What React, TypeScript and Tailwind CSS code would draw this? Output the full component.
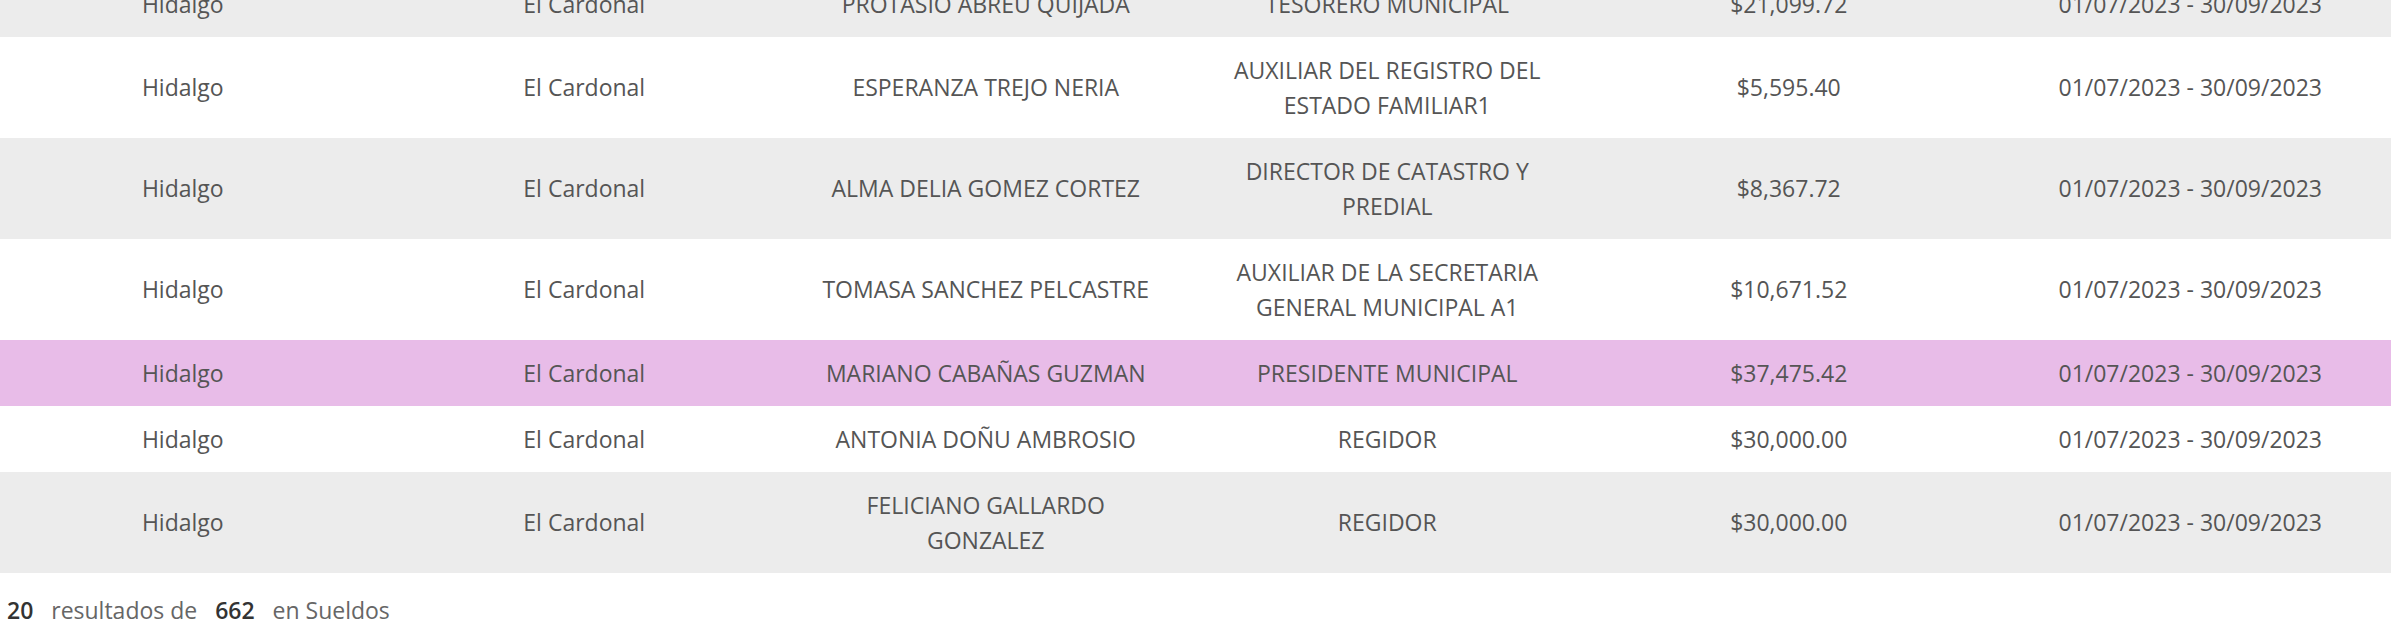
import type { FC } from "react";

type Row = {
   estado: string
   municipio: string
   nombre: string
   cargo: string
   sueldo: string
   periodo: string
   tone: 'gray' | 'white' | 'pink'
}

const rows : Row[] = [
   { estado: 'Hidalgo', municipio: 'El Cardonal', nombre: 'PROTASIO ABREU QUIJADA', cargo: 'TESORERO MUNICIPAL', sueldo: '$21,099.72', periodo: '01/07/2023 - 30/09/2023', tone: 'gray' },
   { estado: 'Hidalgo', municipio: 'El Cardonal', nombre: 'ESPERANZA TREJO NERIA', cargo: 'AUXILIAR DEL REGISTRO DEL ESTADO FAMILIAR1', sueldo: '$5,595.40', periodo: '01/07/2023 - 30/09/2023', tone: 'white' },
   { estado: 'Hidalgo', municipio: 'El Cardonal', nombre: 'ALMA DELIA GOMEZ CORTEZ', cargo: 'DIRECTOR DE CATASTRO Y PREDIAL', sueldo: '$8,367.72', periodo: '01/07/2023 - 30/09/2023', tone: 'gray' },
   { estado: 'Hidalgo', municipio: 'El Cardonal', nombre: 'TOMASA SANCHEZ PELCASTRE', cargo: 'AUXILIAR DE LA SECRETARIA GENERAL MUNICIPAL A1', sueldo: '$10,671.52', periodo: '01/07/2023 - 30/09/2023', tone: 'white' },
   { estado: 'Hidalgo', municipio: 'El Cardonal', nombre: 'MARIANO CABAÑAS GUZMAN', cargo: 'PRESIDENTE MUNICIPAL', sueldo: '$37,475.42', periodo: '01/07/2023 - 30/09/2023', tone: 'pink' },
   { estado: 'Hidalgo', municipio: 'El Cardonal', nombre: 'ANTONIA DOÑU AMBROSIO', cargo: 'REGIDOR', sueldo: '$30,000.00', periodo: '01/07/2023 - 30/09/2023', tone: 'white' },
   { estado: 'Hidalgo', municipio: 'El Cardonal', nombre: 'FELICIANO GALLARDO GONZALEZ', cargo: 'REGIDOR', sueldo: '$30,000.00', periodo: '01/07/2023 - 30/09/2023', tone: 'gray' },
]

const toneClass = {
   gray: 'bg-[#ececec]',
   white: 'bg-white',
   pink: 'bg-[#e8bce8]',
}

const SueldoRow : FC<{row: Row}> = ({row}) => {
   const cells = [row.estado, row.municipio, row.nombre, row.cargo, row.sueldo, row.periodo]
   return (
      <div className={`grid grid-cols-6 items-center py-[15.5px] ${toneClass[row.tone]}`}>
         {cells.map((c, i) => <div key={i} className="px-[26px] text-center">{c}</div>)}
      </div>
   )
}

export default function App() {
   return (
      <div className="w-[2406px] h-[620px] overflow-hidden bg-white text-[#555] text-[23px] leading-[35px]" style={{fontFamily: '"Open Sans", "Liberation Sans", sans-serif'}}>
         <div className="-mt-[29px] -ml-[18px] w-[2409px]">
            {rows.map((r, i) => <SueldoRow key={i} row={r} />)}
         </div>
         <p className="pl-[7px] pt-[20px] text-[#666]">
            <span className="font-semibold text-[#333]">20</span>&nbsp;&nbsp; resultados de&nbsp;&nbsp; <span className="font-semibold text-[#333]">662</span>&nbsp;&nbsp; en Sueldos
         </p>
      </div>
   )
}
